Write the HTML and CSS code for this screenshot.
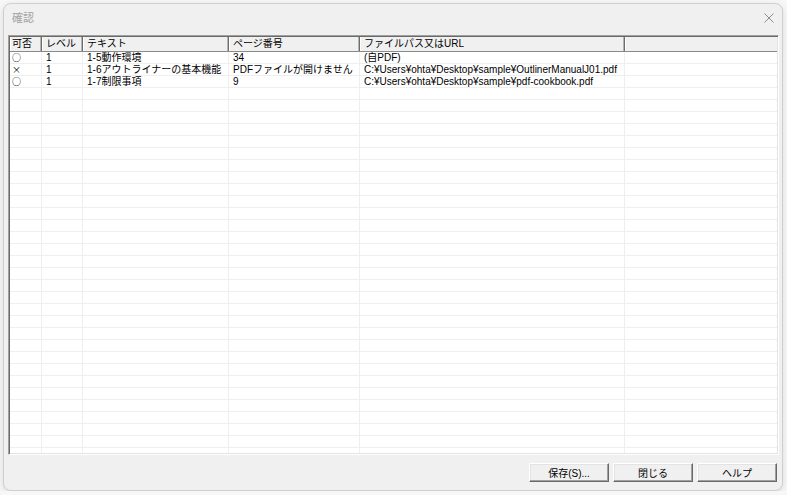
FILE: index.html
```html
<!DOCTYPE html>
<html>
<head>
	<meta charset="utf-8">
	<title>確認</title>
	<link rel="stylesheet" href="styles.css">
</head>
<body>
	<div class="dialog">
		<div class="titlebar">
			<span class="title">確認</span>
			<svg class="close" width="10" height="10" viewBox="0 0 10 10">
				<path d="M0.5 0.5L9.5 9.5M9.5 0.5L0.5 9.5" stroke="#8c8c8c" stroke-width="1" fill="none"/>
			</svg>
		</div>
		<div class="list">
			<div class="row head">
				<div class="cell">可否</div>
				<div class="cell">レベル</div>
				<div class="cell">テキスト</div>
				<div class="cell">ページ番号</div>
				<div class="cell">ファイルパス又はURL</div>
				<div class="cell"></div>
			</div>
			<div class="rows">
				<div class="row">
					<div class="cell mark">○</div>
					<div class="cell">1</div>
					<div class="cell">1-5動作環境</div>
					<div class="cell">34</div>
					<div class="cell">(自PDF)</div>
					<div class="cell"></div>
				</div>
				<div class="row">
					<div class="cell mark">×</div>
					<div class="cell">1</div>
					<div class="cell">1-6アウトライナーの基本機能</div>
					<div class="cell">PDFファイルが開けません</div>
					<div class="cell">C:¥Users¥ohta¥Desktop¥sample¥OutlinerManualJ01.pdf</div>
					<div class="cell"></div>
				</div>
				<div class="row">
					<div class="cell mark">○</div>
					<div class="cell">1</div>
					<div class="cell">1-7制限事項</div>
					<div class="cell">9</div>
					<div class="cell">C:¥Users¥ohta¥Desktop¥sample¥pdf-cookbook.pdf</div>
					<div class="cell"></div>
				</div>
				<div class="row filler">
					<div class="cell"></div>
					<div class="cell"></div>
					<div class="cell"></div>
					<div class="cell"></div>
					<div class="cell"></div>
					<div class="cell"></div>
				</div>
			</div>
		</div>
		<div class="buttons">
			<button type="button">保存(S)...</button>
			<button type="button">閉じる</button>
			<button type="button">ヘルプ</button>
		</div>
	</div>
</body>
</html>
```

FILE: styles.css
```css
body {
	margin: 0;
	background-color: #f7f7f7;
	font-family: "Liberation Sans", "Noto Sans CJK JP", sans-serif;
	font-size: 10px;
	color: #000000;
}
.dialog {
	box-sizing: border-box;
	width: 780px;
	height: 488px;
	margin: 3px 0 0 3px;
	background-color: #f0f0f0;
	border: 1px solid #cfcfcf;
	border-radius: 8px;
	box-shadow: 0 2px 6px rgba(0, 0, 0, 0.12);
	display: flex;
	flex-direction: column;
}
.titlebar {
	box-sizing: border-box;
	height: 31px;
	display: flex;
	align-items: flex-start;
	justify-content: space-between;
	padding: 5px 8px 0 8px;
}
.title {
	color: #a3a3a3;
	font-size: 11px;
}
.close {
	display: block;
	margin-top: 4px;
}
.list {
	box-sizing: border-box;
	height: 420px;
	margin: 0 3px 0 4px;
	background-color: #ffffff;
	border-top: 1px solid #a0a0a0;
	border-left: 1px solid #a0a0a0;
	border-right: 1px solid #ffffff;
	border-bottom: 1px solid #ffffff;
	box-shadow: inset 1px 1px 0 #696969, inset -1px -1px 0 #e3e3e3;
	padding: 1px 1px 1px 1px;
	display: flex;
	flex-direction: column;
	overflow: hidden;
}
.row {
	display: grid;
	grid-template-columns: 32px 41px 146px 131px 265px 1fr;
	height: 12px;
	line-height: 11px;
	white-space: nowrap;
}
.cell {
	box-sizing: border-box;
	padding-left: 4px;
	border-right: 1px solid #efefef;
	overflow: hidden;
}
.cell:first-child {
	padding-left: 2px;
}
.head {
	height: 14px;
	line-height: 13px;
	background-color: #f0f0f0;
	border-bottom: 1px solid #8a8a8a;
}
.head .cell {
	border-right: 1px solid #6d6d6d;
	box-shadow: inset -1px 0 0 #b4b4b4, inset 1px 0 0 #ffffff;
}
.head .cell:last-child {
	border-right: none;
	box-shadow: inset 1px 0 0 #ffffff;
}
.rows {
	flex: 1;
	display: flex;
	flex-direction: column;
	background-image: repeating-linear-gradient(to bottom, transparent 0, transparent 11px, #efefef 11px, #efefef 12px);
}
.rows .cell:last-child {
	border-right: none;
}
.mark {
	font-family: "Noto Sans CJK JP", sans-serif;
	font-size: 9px;
	line-height: 11px;
}
.filler {
	flex: 1;
	height: auto;
}
.buttons {
	display: flex;
	justify-content: flex-end;
	gap: 4px;
	padding: 8px 5px 0 0;
}
.buttons button {
	width: 80px;
	height: 19px;
	padding: 0;
	font-family: "Liberation Sans", "Noto Sans CJK JP", sans-serif;
	font-size: 10px;
	color: #000000;
	background-color: #f0f0f0;
	border: 1px solid;
	border-color: #ffffff #696969 #696969 #ffffff;
	box-shadow: inset -1px -1px 0 #a0a0a0, inset 1px 1px 0 #e3e3e3;
	border-radius: 0;
}
```
